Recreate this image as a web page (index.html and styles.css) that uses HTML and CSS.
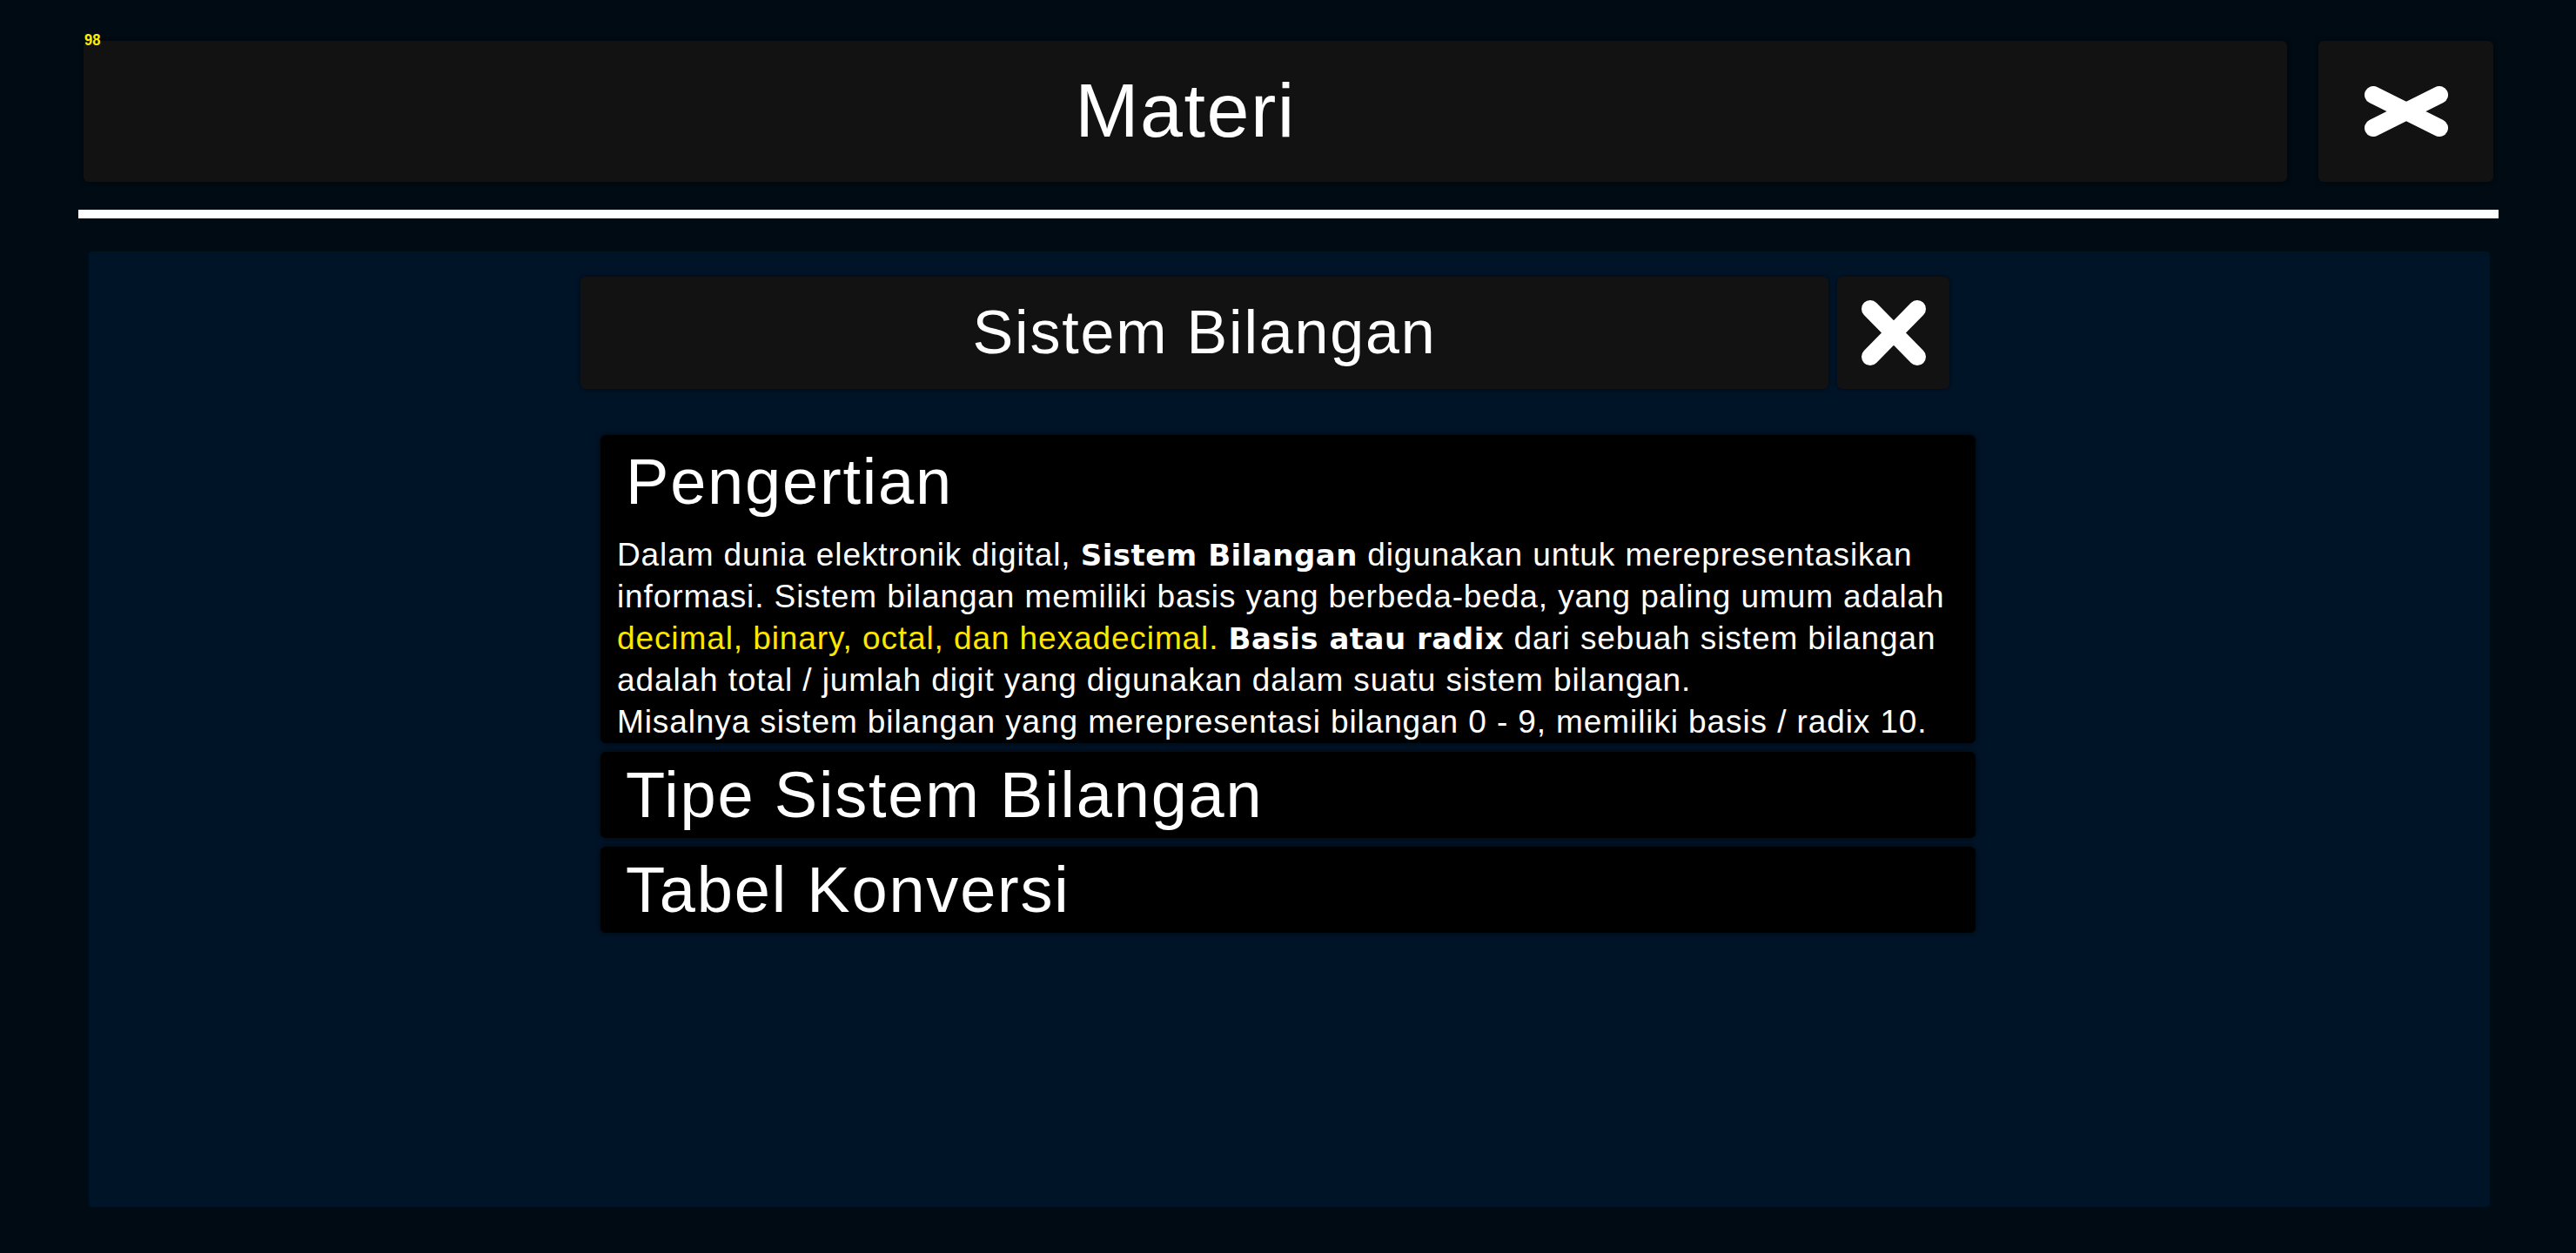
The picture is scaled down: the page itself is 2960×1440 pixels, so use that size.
FILE: index.html
```html
<!DOCTYPE html>
<html lang="id">
<head>
<meta charset="utf-8">
<title>Materi</title>
<link rel="stylesheet" href="styles.css">
</head>
<body>
<div class="page">
  <div class="fps">98</div>
  <header class="top">
    <div class="top-title">Materi</div>
    <button class="top-close" aria-label="Tutup">
      <svg width="96" height="58" viewBox="0 0 96 58"><path d="M10 10 L86 48 M10 48 L86 10" stroke="#fff" stroke-width="20" stroke-linecap="round" fill="none"/></svg>
    </button>
  </header>
  <div class="rule"></div>
  <main class="panel">
    <div class="column">
      <div class="sub">
        <div class="sub-title">Sistem Bilangan</div>
        <button class="sub-close" aria-label="Tutup">
          <svg width="76" height="77" viewBox="0 0 76 77"><path d="M11 11 L65 66 M11 66 L65 11" stroke="#fff" stroke-width="20" stroke-linecap="round" fill="none"/></svg>
        </button>
      </div>
      <div class="list">
        <section class="item open">
          <h2 class="item-title">Pengertian</h2>
          <p class="item-body">Dalam dunia elektronik digital, <b>Sistem Bilangan</b> digunakan untuk merepresentasikan<br>informasi. Sistem bilangan memiliki basis yang berbeda-beda, yang paling umum adalah<br><span class="hl">decimal, binary, octal, dan hexadecimal.</span> <b>Basis atau radix</b> dari sebuah sistem bilangan<br>adalah total / jumlah digit yang digunakan dalam suatu sistem bilangan.<br>Misalnya sistem bilangan yang merepresentasi bilangan 0 - 9, memiliki basis / radix 10.</p>
        </section>
        <section class="item">
          <h2 class="item-title">Tipe Sistem Bilangan</h2>
        </section>
        <section class="item">
          <h2 class="item-title">Tabel Konversi</h2>
        </section>
      </div>
    </div>
  </main>
</div>
</body>
</html>
```
FILE: styles.css
```css
html, body {
  margin: 0;
  padding: 0;
}
body {
  background: #010b14;
  width: 2960px;
  height: 1440px;
  overflow: hidden;
  font-family: "Liberation Sans", Arial, sans-serif;
  color: #fff;
}
.page {
  position: relative;
  padding: 47px 89px 0 90px;
}
.fps {
  position: absolute;
  left: 97px;
  top: 36px;
  font-family: "Liberation Sans", Arial, sans-serif;
  font-weight: bold;
  font-size: 18px;
  color: #ffee00;
  z-index: 2;
  transform: scaleX(0.92);
  transform-origin: left top;
}
.top {
  display: flex;
  gap: 36px;
  margin: 0 6px;
  height: 162px;
}
.top-title {
  flex: 1;
  background: #121212;
  border-radius: 6px;
  box-shadow: 0 0 5px rgba(0, 0, 0, 0.6);
  text-align: center;
  font-size: 88px;
  letter-spacing: 1.5px;
  line-height: 160px;
}
.top-close, .sub-close {
  border: 0;
  padding: 0;
  margin: 0;
  background: #121212;
  border-radius: 6px;
  box-shadow: 0 0 5px rgba(0, 0, 0, 0.6);
  display: flex;
  align-items: center;
  justify-content: center;
}
.top-close {
  width: 201px;
}
.rule {
  height: 10px;
  background: #fff;
  margin-top: 32px;
}
.panel {
  margin: 38px 10px 0 12px;
  height: 1098px;
  background: #001428;
  border-radius: 4px;
  padding-top: 29px;
  box-sizing: border-box;
}
.column {
  width: 1580px;
  margin-left: 588px;
}
.sub {
  display: flex;
  gap: 10px;
  margin-left: -23px;
  width: 1573px;
  height: 129px;
}
.sub-title {
  flex: 1;
  background: #121212;
  border-radius: 6px;
  box-shadow: 0 0 6px rgba(0, 0, 0, 0.6);
  text-align: center;
  font-size: 70px;
  letter-spacing: 1.8px;
  line-height: 129px;
}
.sub-close {
  width: 129px;
}
.list {
  margin-top: 53px;
  display: flex;
  flex-direction: column;
  gap: 10px;
}
.item {
  background: #000;
  border-radius: 6px;
  box-shadow: 0 0 7px rgba(0, 0, 0, 0.7);
  min-height: 99px;
}
.item-title {
  margin: 0;
  padding-left: 29px;
  font-weight: normal;
  font-size: 74px;
  letter-spacing: 1.8px;
  line-height: 99px;
}
.item.open .item-title {
  padding-top: 4px;
}
.item-body {
  margin: 11px 0 0 0;
  padding: 0 0 1px 19px;
  font-size: 37px;
  letter-spacing: 0.9px;
  line-height: 47.4px;
  white-space: nowrap;
}
.item-body b {
  font-family: "DejaVu Sans", sans-serif;
  font-weight: bold;
  font-size: 34px;
  letter-spacing: 0.5px;
}
.hl {
  color: #ffe600;
}
```
